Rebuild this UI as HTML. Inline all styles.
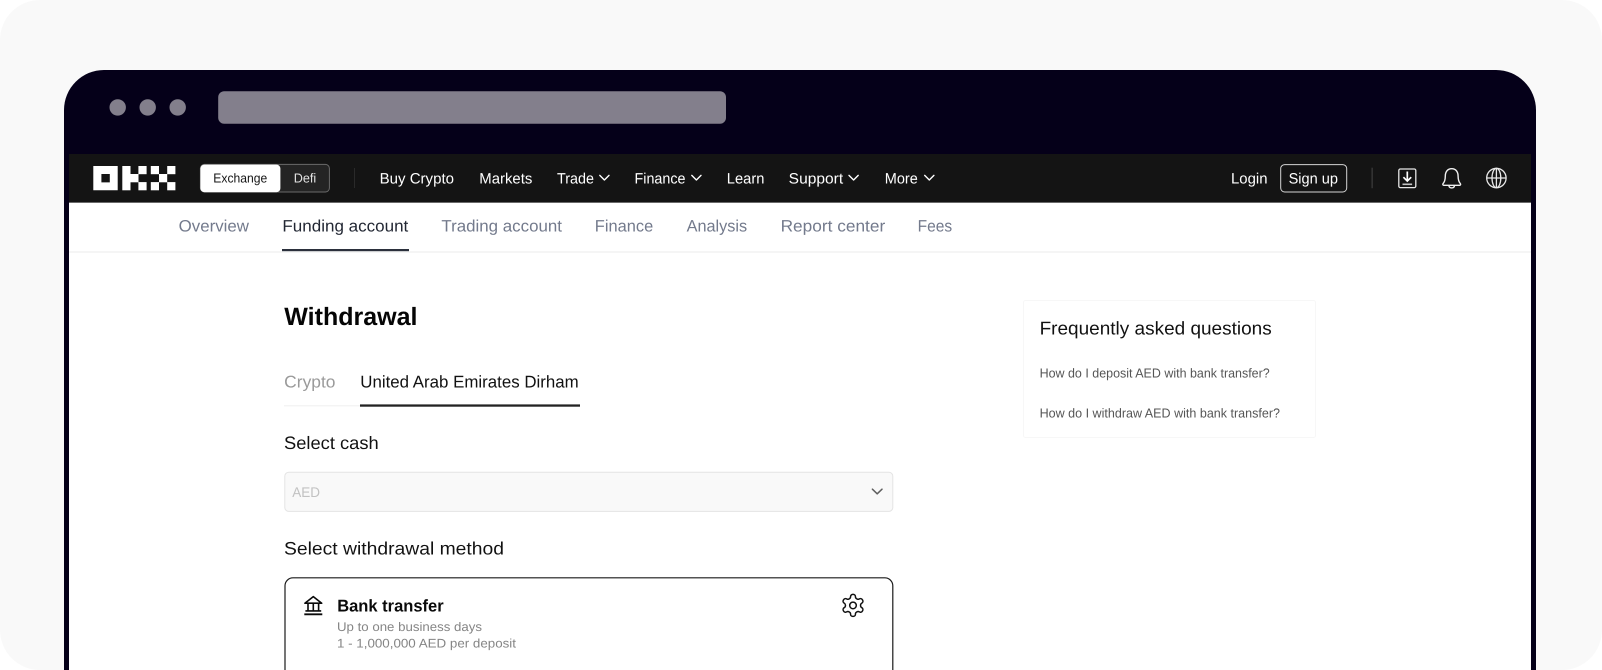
<!DOCTYPE html>
<html lang="en">
<head>
<meta charset="utf-8">
<title>Withdrawal</title>
<style>
html,body{margin:0;padding:0;width:1602px;height:670px;overflow:hidden;background:#fff}
svg{display:block}
text{font-family:"Liberation Sans",sans-serif;text-rendering:geometricPrecision}
.n{font-size:15px;fill:#fff}
.s{font-size:16.5px;fill:#737a8c}
</style>
</head>
<body>
<svg width="1602" height="670" viewBox="0 0 1602 670" xmlns="http://www.w3.org/2000/svg">
<rect x="0" y="0" width="1602" height="670" rx="40" fill="#f9f9f9"/>
<!-- Browser frame -->
<path d="M64 670V110a40 40 0 0 1 40-40H1496a40 40 0 0 1 40 40V670z" fill="#050019"/>
<circle cx="117.7" cy="107.4" r="8.2" fill="#837f8c"/>
<circle cx="147.7" cy="107.4" r="8.2" fill="#837f8c"/>
<circle cx="177.7" cy="107.4" r="8.2" fill="#837f8c"/>
<rect x="218.2" y="91.3" width="507.8" height="32.4" rx="6" fill="#837f8c"/>
<!-- Page -->
<rect x="69" y="154" width="1462" height="516" fill="#fff"/>
<!-- Top nav -->
<rect x="69" y="154" width="1462" height="48.5" fill="#141414"/>
<rect x="69" y="202" width="1462" height="1" fill="#6a6a6a"/>
<!-- Logo -->
<g fill="#fff">
<path fill-rule="evenodd" d="M93.3 166H117.7V190.3H93.3ZM101.4 174V182.4H109.8V174Z"/>
<rect x="122.3" y="166" width="8.2" height="24.3"/>
<rect x="130.3" y="174" width="8.2" height="8.3"/>
<rect x="138.4" y="166" width="8.2" height="8.2"/>
<rect x="138.4" y="182.1" width="8.2" height="8.2"/>
<rect x="150.8" y="166" width="8.2" height="8.2"/>
<rect x="150.8" y="182.1" width="8.2" height="8.2"/>
<rect x="159" y="174" width="8.2" height="8.3"/>
<rect x="167.2" y="166" width="8.2" height="8.2"/>
<rect x="167.2" y="182.1" width="8.2" height="8.2"/>
</g>
<!-- Toggle -->
<rect x="200.4" y="164.4" width="129" height="27.6" rx="4" fill="#242424" stroke="#6a6a6a" stroke-width="1"/>
<rect x="200.4" y="164.6" width="80" height="27.6" rx="4" fill="#fff"/>
<text x="213.3" y="182.7" font-size="13" fill="#141414" textLength="54" lengthAdjust="spacingAndGlyphs">Exchange</text>
<text x="293.7" y="182.7" font-size="13" fill="#e2e2e2" textLength="22.5" lengthAdjust="spacingAndGlyphs">Defi</text>
<rect x="354" y="168" width="1" height="20" fill="#2a2a2a"/>
<!-- Nav items -->
<text class="n" x="379.6" y="183.5" textLength="74.4" lengthAdjust="spacingAndGlyphs">Buy Crypto</text>
<text class="n" x="479.3" y="183.5" textLength="53" lengthAdjust="spacingAndGlyphs">Markets</text>
<text class="n" x="557" y="183.5" textLength="37" lengthAdjust="spacingAndGlyphs">Trade</text>
<text class="n" x="634.5" y="183.5" textLength="51" lengthAdjust="spacingAndGlyphs">Finance</text>
<text class="n" x="726.8" y="183.5" textLength="37.6" lengthAdjust="spacingAndGlyphs">Learn</text>
<text class="n" x="788.7" y="183.5" textLength="54.5" lengthAdjust="spacingAndGlyphs">Support</text>
<text class="n" x="884.8" y="183.5" textLength="33" lengthAdjust="spacingAndGlyphs">More</text>
<g fill="none" stroke="#fff" stroke-width="1.4" stroke-linecap="round" stroke-linejoin="round">
<path d="M599.8 175.4l4.6 4.6 4.6-4.6"/>
<path d="M691.8 175.4l4.6 4.6 4.6-4.6"/>
<path d="M849 175.4l4.6 4.6 4.6-4.6"/>
<path d="M924.7 175.4l4.6 4.6 4.6-4.6"/>
</g>
<text class="n" x="1231" y="183.5" textLength="36.5" lengthAdjust="spacingAndGlyphs">Login</text>
<rect x="1280.7" y="164.6" width="66" height="27.4" rx="4" fill="none" stroke="#d4d4d4" stroke-width="1"/>
<text class="n" x="1288.6" y="183.5" textLength="49.4" lengthAdjust="spacingAndGlyphs">Sign up</text>
<rect x="1371.5" y="167.7" width="1.3" height="20.5" fill="#3a3a3a"/>
<!-- Download -->
<g fill="none" stroke="#e6e6e6" stroke-width="1.3">
<rect x="1398.8" y="169" width="17" height="18.6" rx="1.5"/>
<path d="M1407.3 171.5v9.5M1403.4 177.2l3.9 3.9 3.9-3.9" stroke="#fff" stroke-width="1.7"/>
<path d="M1402.5 184.3h9.6" stroke="#c4c4c4" stroke-width="1.6"/>
</g>
<!-- Bell -->
<g fill="none" stroke="#f0f0f0" stroke-width="1.4" stroke-linejoin="round">
<path d="M1451.7 168.7c-4.4 0-6.4 3.6-6.4 7.4 0 4.4-.9 6-2.3 7.6-.5.6-.1 1.6.8 1.6h15.8c.9 0 1.3-1 .8-1.6-1.4-1.6-2.3-3.2-2.3-7.6 0-3.8-2-7.4-6.4-7.4z"/>
<path d="M1448.8 185.3c.2 1.6 1.4 2.6 2.9 2.6s2.7-1 2.9-2.6"/>
</g>
<!-- Globe -->
<g fill="none" stroke="#e8e8e8" stroke-width="1.3">
<circle cx="1496.4" cy="178" r="9.7"/>
<ellipse cx="1496.4" cy="178" rx="4.4" ry="9.7"/>
<path d="M1486.7 178h19.4M1496.4 168.3v19.4"/>
</g>
<!-- Sub nav -->
<rect x="69" y="251" width="1462" height="2" fill="#f5f5f5"/>
<text class="s" x="178.7" y="231.7" textLength="70.3" lengthAdjust="spacingAndGlyphs">Overview</text>
<text class="s" x="282.4" y="231.7" style="fill:#222733" textLength="125.9" lengthAdjust="spacingAndGlyphs">Funding account</text>
<text class="s" x="441.4" y="231.7" textLength="120.6" lengthAdjust="spacingAndGlyphs">Trading account</text>
<text class="s" x="594.8" y="231.7" textLength="58.4" lengthAdjust="spacingAndGlyphs">Finance</text>
<text class="s" x="686.6" y="231.7" textLength="60.6" lengthAdjust="spacingAndGlyphs">Analysis</text>
<text class="s" x="780.6" y="231.7" textLength="104.6" lengthAdjust="spacingAndGlyphs">Report center</text>
<text class="s" x="917.6" y="231.7" textLength="34.6" lengthAdjust="spacingAndGlyphs">Fees</text>
<rect x="282" y="249" width="127" height="2.2" fill="#2b303c"/>
<!-- Heading -->
<text x="284.3" y="325" font-size="25" font-weight="700" fill="#050505" textLength="133.2" lengthAdjust="spacingAndGlyphs">Withdrawal</text>
<!-- Tabs -->
<text x="284.2" y="387.3" font-size="17" fill="#9a9a9a" textLength="51.3" lengthAdjust="spacingAndGlyphs">Crypto</text>
<text x="360.3" y="387.3" font-size="17" fill="#111" textLength="218.4" lengthAdjust="spacingAndGlyphs">United Arab Emirates Dirham</text>
<rect x="284" y="405" width="77" height="1.5" fill="#f4f4f4"/>
<rect x="360" y="404.4" width="220" height="2.3" fill="#222"/>
<!-- Select cash -->
<text x="284" y="448.8" font-size="18" fill="#111" textLength="94.7" lengthAdjust="spacingAndGlyphs">Select cash</text>
<rect x="284.8" y="472.2" width="608" height="39.2" rx="4" fill="#f9f9f9" stroke="#e4e4e4" stroke-width="1"/>
<text x="292.2" y="497" font-size="14" fill="#c2c2c2" textLength="27.8" lengthAdjust="spacingAndGlyphs">AED</text>
<path d="M872.4 489.2l4.8 4.6 4.8-4.6" fill="none" stroke="#5f5f5f" stroke-width="1.5" stroke-linecap="round" stroke-linejoin="round"/>
<!-- Method -->
<text x="284" y="554.3" font-size="18" fill="#111" textLength="220" lengthAdjust="spacingAndGlyphs">Select withdrawal method</text>
<rect x="285" y="577.8" width="607.8" height="120" rx="8" fill="#fff" stroke="#1a1a1a" stroke-width="1.2"/>
<!-- Bank icon -->
<g fill="none" stroke="#0a0a0a" stroke-width="1.6">
<path d="M304.9 603.2L313.3 596.6l8.4 6.6z" stroke-linejoin="round"/>
<path d="M308 603.5v7.4M313.3 603.5v7.4M318.6 603.5v7.4"/>
<path d="M305.4 610.9h15.8"/>
<path d="M304.3 614.3h18" stroke-width="1.9"/>
</g>
<text x="337.2" y="611.7" font-size="17" font-weight="700" fill="#0a0a0a" textLength="106.5" lengthAdjust="spacingAndGlyphs">Bank transfer</text>
<text x="337" y="631" font-size="12.5" fill="#858585" textLength="145" lengthAdjust="spacingAndGlyphs">Up to one business days</text>
<text x="337" y="647.3" font-size="12.5" fill="#858585" textLength="179" lengthAdjust="spacingAndGlyphs">1 - 1,000,000 AED per deposit</text>
<!-- Gear -->
<g transform="translate(839.8 592.2) scale(1.1)" fill="none" stroke="#111" stroke-width="1.35" stroke-linejoin="round">
<path d="M12.22 2h-.44a2 2 0 0 0-2 2v.18a2 2 0 0 1-1 1.73l-.43.25a2 2 0 0 1-2 0l-.15-.08a2 2 0 0 0-2.73.73l-.22.38a2 2 0 0 0 .73 2.73l.15.1a2 2 0 0 1 1 1.72v.51a2 2 0 0 1-1 1.74l-.15.09a2 2 0 0 0-.73 2.73l.22.38a2 2 0 0 0 2.73.73l.15-.08a2 2 0 0 1 2 0l.43.25a2 2 0 0 1 1 1.73V20a2 2 0 0 0 2 2h.44a2 2 0 0 0 2-2v-.18a2 2 0 0 1 1-1.73l.43-.25a2 2 0 0 1 2 0l.15.08a2 2 0 0 0 2.73-.73l.22-.39a2 2 0 0 0-.73-2.73l-.15-.08a2 2 0 0 1-1-1.74v-.5a2 2 0 0 1 1-1.74l.15-.09a2 2 0 0 0 .73-2.73l-.22-.38a2 2 0 0 0-2.73-.73l-.15.08a2 2 0 0 1-2 0l-.43-.25a2 2 0 0 1-1-1.73V4a2 2 0 0 0-2-2z"/>
<circle cx="12" cy="12" r="3"/>
</g>
<!-- FAQ -->
<rect x="1023.5" y="300.5" width="292" height="137" rx="2" fill="#fff" stroke="#f7f7f7" stroke-width="1"/>
<text x="1039.6" y="334.3" font-size="18.5" fill="#111" textLength="232.1" lengthAdjust="spacingAndGlyphs">Frequently asked questions</text>
<text x="1039.6" y="377.3" font-size="13" fill="#555" textLength="230.1" lengthAdjust="spacingAndGlyphs">How do I deposit AED with bank transfer?</text>
<text x="1039.6" y="417.7" font-size="13" fill="#555" textLength="240.4" lengthAdjust="spacingAndGlyphs">How do I withdraw AED with bank transfer?</text>
</svg>
</body>
</html>
